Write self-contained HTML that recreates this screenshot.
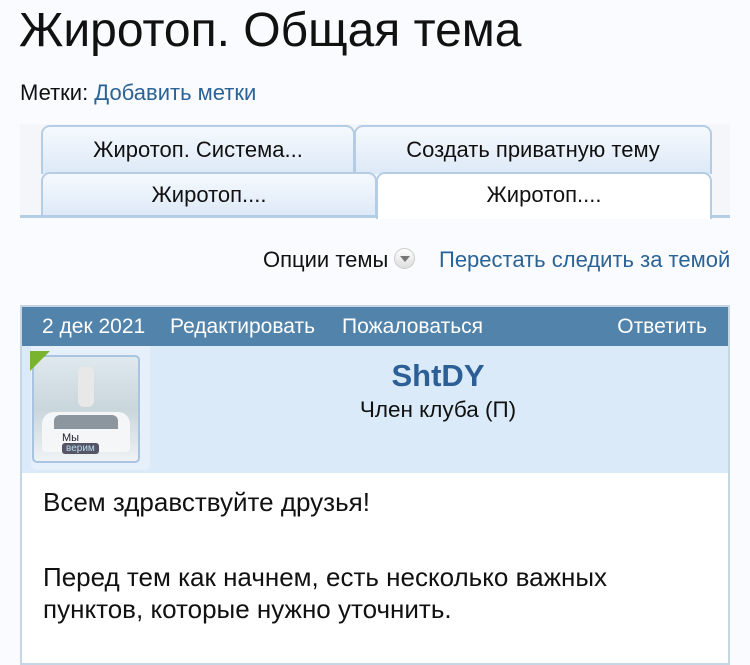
<!DOCTYPE html>
<html><head><meta charset="utf-8"><style>
body{margin:0;width:750px;height:657px;overflow:hidden;background:#fafbfe;font-family:"Liberation Sans",sans-serif;color:#111;position:relative}
.a{position:absolute;white-space:nowrap}
.tab{position:absolute;box-sizing:border-box;border:2px solid #b4cde4;border-bottom:none;border-radius:9px 9px 0 0;background:linear-gradient(#f5f9fe,#dde9f7);text-align:center;font-size:22px;color:#111}
</style></head><body>
<div class="a" style="left:19px;top:3px;font-size:48px;color:#111">Жиротоп. Общая тема</div>
<div class="a" style="left:20px;top:80px;font-size:22px">Метки: <span style="color:#2b6396">Добавить метки</span></div>
<div class="a" style="left:20px;top:124px;width:710px;height:94px;background:#f4f6fa"></div>
<div class="tab" style="left:41px;top:125px;width:314px;height:49px;line-height:46px">Жиротоп. Система...</div>
<div class="tab" style="left:354px;top:125px;width:358px;height:49px;line-height:46px">Создать приватную тему</div>
<div class="tab" style="left:41px;top:172px;width:336px;height:45px;line-height:42px">Жиротоп....</div>
<div class="tab" style="left:376px;top:172px;width:336px;height:47px;line-height:42px;background:#fff">Жиротоп....</div>
<div class="a" style="left:20px;top:215px;width:356px;height:3px;background:#b4cde4"></div>
<div class="a" style="left:710px;top:215px;width:20px;height:3px;background:#b4cde4"></div>
<div class="a" style="left:263px;top:247px;font-size:22px">Опции темы</div>
<div class="a" style="left:394px;top:248px;width:21px;height:21px;border-radius:50%;background:linear-gradient(#fff,#ddd);border:1px solid #ccc;box-sizing:border-box"><div style="position:absolute;left:5px;top:7px;border-left:5px solid transparent;border-right:5px solid transparent;border-top:6px solid #777"></div></div>
<div class="a" style="left:439px;top:247px;font-size:22px;color:#2b6396">Перестать следить за темой</div>
<div class="a" style="left:20px;top:305px;width:710px;height:360px;border:2px solid #c7d6e4;box-sizing:border-box;background:#fff"></div>
<div class="a" style="left:22px;top:307px;width:706px;height:39px;background:#5283ab;color:#fff;font-size:21px;line-height:39px"><span style="position:absolute;left:20px">2 дек 2021</span><span style="position:absolute;left:148px">Редактировать</span><span style="position:absolute;left:320px">Пожаловаться</span><span style="position:absolute;right:21px">Ответить</span></div>
<div class="a" style="left:22px;top:346px;width:706px;height:127px;background:#daeaf8"></div>
<div class="a" style="left:31px;top:346px;width:119px;height:124px;background:#e6f0fa;border-radius:0 0 6px 6px"></div>
<div class="a" style="left:32px;top:355px;width:108px;height:108px;border:2px solid #a8c4e0;border-radius:5px;box-sizing:border-box;background:linear-gradient(#dfe9ee,#c9d6dc 50%,#eef2f4);overflow:hidden">
<div style="position:absolute;left:8px;top:55px;width:88px;height:40px;background:#f4f6f8;border-radius:12px 12px 4px 4px"></div>
<div style="position:absolute;left:20px;top:58px;width:64px;height:14px;background:#8b969e;border-radius:6px 6px 0 0"></div>
<div style="position:absolute;left:44px;top:10px;width:16px;height:40px;background:#e8e8e8;border-radius:6px"></div>
<div style="position:absolute;left:28px;top:75px;font-size:11px;color:#223">Мы</div>
<div style="position:absolute;left:28px;top:86px;font-size:10px;background:#556;color:#bde;padding:0 4px;border-radius:3px">верим</div>
</div>
<div class="a" style="left:30px;top:351px;width:0;height:0;border-top:20px solid #7ab32e;border-right:20px solid transparent"></div>
<div class="a" style="left:22px;top:358px;width:832px;text-align:center;font-size:31px;font-weight:bold;color:#2b5f96">ShtDY</div>
<div class="a" style="left:22px;top:397px;width:832px;text-align:center;font-size:22.5px">Член клуба (П)</div>
<div class="a" style="left:43px;top:486px;font-size:26px;line-height:33px">Всем здравствуйте друзья!</div>
<div class="a" style="left:43px;top:561px;font-size:26px;line-height:32px">Перед тем как начнем, есть несколько важных<br>пунктов, которые нужно уточнить.</div>
</body></html>
